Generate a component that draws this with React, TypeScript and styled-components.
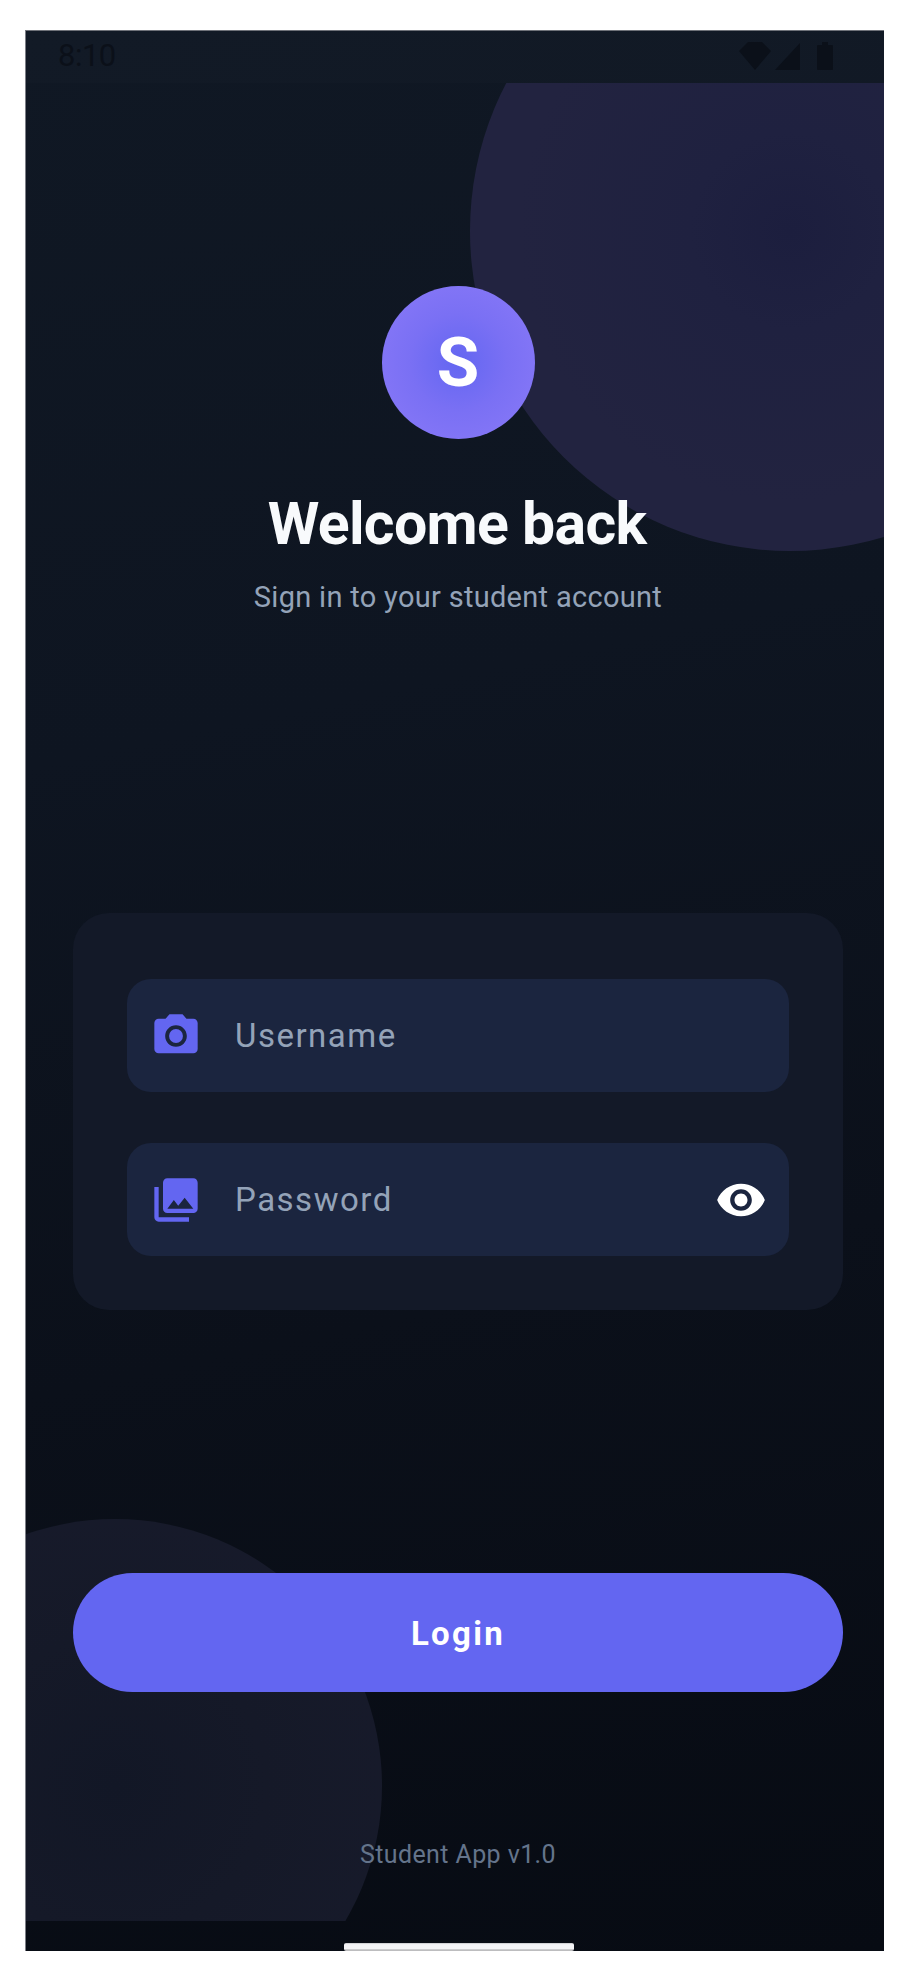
import React from "react";
import styled, { createGlobalStyle } from "styled-components";
import { MdPhotoCamera, MdPhotoLibrary, MdVisibility } from "react-icons/md";

const Global = createGlobalStyle`
  html, body { margin: 0; padding: 0; background: #ffffff; }
  * { box-sizing: border-box; }
  body { font-family: Roboto, "Liberation Sans", sans-serif; }
`;

const Page = styled.div`
  width: 913px;
  height: 1983px;
  padding: 30px 29px 32px 25px;
  background: #ffffff;
`;

const Screen = styled.div`
  position: relative;
  width: 859px;
  height: 1921px;
  display: flex;
  flex-direction: column;
  overflow: hidden;
  border-left: 1px solid #7c7e86;
  border-top: 1px solid #6f7279;
  background: linear-gradient(168deg, #101824 0%, #0e1521 35%, #0b101a 65%, #070b13 100%);
`;

const StatusBar = styled.div`
  position: relative;
  z-index: 1;
  flex: none;
  height: 52px;
  display: flex;
  align-items: center;
  justify-content: space-between;
  padding: 0 50px 2px 32px;
  background: rgba(24, 30, 44, 0.25);
`;

const Clock = styled.span`
  font-size: 31px;
  font-weight: 400;
  line-height: 36px;
  letter-spacing: -0.5px;
  color: #0b1019;
`;

const StatusIcons = styled.div`
  display: flex;
  align-items: center;
`;

const SignalIcon = styled.svg`
  margin-left: 2px;
`;

const BatteryIcon = styled.svg`
  margin-left: 14px;
`;

const BlobLayer = styled.div`
  position: absolute;
  top: 52px;
  left: 0;
  right: 0;
  bottom: 30px;
  overflow: hidden;
`;

const TopBlob = styled.div`
  position: absolute;
  left: 444px;
  top: -172px;
  width: 640px;
  height: 640px;
  border-radius: 50%;
  background: radial-gradient(circle at 50% 50%, #1c1e3e 0%, #1f2140 22%, #222340 60%);
`;

const BottomBlob = styled.div`
  position: absolute;
  left: -178px;
  top: 1436px;
  width: 534px;
  height: 534px;
  border-radius: 50%;
  background: radial-gradient(circle at 50% 50%, #121726 0%, #151928 40%, #181b2c 100%);
`;

const Main = styled.main`
  position: relative;
  z-index: 1;
  flex: 1;
  display: flex;
  flex-direction: column;
  align-items: center;
  padding: 0 41px 0 47px;
`;

const Avatar = styled.div`
  width: 153px;
  height: 153px;
  margin-top: 203px;
  flex: none;
  display: flex;
  align-items: center;
  justify-content: center;
  border-radius: 50%;
  background: radial-gradient(circle at 50% 50%, #6366f1 0%, #7a70f4 45%, #8b7af8 100%);
  color: #ffffff;
  font-size: 69px;
  font-weight: 700;
  line-height: 1;
`;

const Title = styled.h1`
  margin: 50px 2px 0 0;
  font-size: 59px;
  font-weight: 700;
  line-height: 70px;
  letter-spacing: -0.7px;
  color: #f8fafc;
  white-space: nowrap;
`;

const Subtitle = styled.p`
  margin: 18px 0 0;
  font-size: 29px;
  font-weight: 400;
  line-height: 40px;
  letter-spacing: 0.3px;
  color: #94a3b8;
  white-space: nowrap;
`;

const Card = styled.section`
  width: 770px;
  margin-top: 296px;
  padding: 66px 54px 54px 54px;
  display: flex;
  flex-direction: column;
  gap: 51px;
  border-radius: 36px;
  background: #131928;
`;

const Field = styled.div`
  height: 113px;
  display: flex;
  align-items: center;
  gap: 33px;
  padding: 0 22px 0 23px;
  border-radius: 24px;
  background: #1b253f;
  color: #6366f1;
`;

const Placeholder = styled.span`
  flex: 1;
  font-size: 33px;
  line-height: 40px;
  letter-spacing: 1.5px;
  color: #94a3b8;
`;

const LoginButton = styled.button`
  width: 770px;
  height: 119px;
  margin-top: 263px;
  padding: 2px 0 0;
  flex: none;
  border: 0;
  border-radius: 60px;
  background: #6366f1;
  color: #ffffff;
  font-family: inherit;
  font-size: 33px;
  font-weight: 700;
  letter-spacing: 2.3px;
`;

const Footer = styled.p`
  margin: 145px 0 0;
  font-size: 25px;
  line-height: 36px;
  letter-spacing: 0.4px;
  color: #64748b;
`;

const NavBar = styled.div`
  position: relative;
  z-index: 1;
  flex: none;
  height: 30px;
  display: flex;
  align-items: flex-end;
  justify-content: center;
  padding-left: 8px;
`;

const HomeIndicator = styled.div`
  width: 230px;
  height: 8px;
  border-radius: 2px;
  background: linear-gradient(#c4c5c8 0, #f4f4f6 20%, #f4f4f6 70%, #bdbdbf 85%);
`;

export default function App() {
  return (
    <>
      <Global />
      <Page>
        <Screen>
          <BlobLayer>
            <TopBlob />
            <BottomBlob />
          </BlobLayer>
          <StatusBar>
            <Clock>8:10</Clock>
            <StatusIcons>
              <svg width="34" height="28" viewBox="0 0 34 28" fill="#0b1019">
                <path d="M10 0h14l9 9-16 19L1 9z" />
              </svg>
              <SignalIcon width="28" height="28" viewBox="0 0 28 28" fill="#0b1019">
                <path d="M26 1v27H1z" />
              </SignalIcon>
              <BatteryIcon width="18" height="28" viewBox="0 0 18 28" fill="#0b1019">
                <path d="M6 0h6v3h4a1 1 0 0 1 1 1v23a1 1 0 0 1-1 1H2a1 1 0 0 1-1-1V4a1 1 0 0 1 1-1h4z" />
              </BatteryIcon>
            </StatusIcons>
          </StatusBar>
          <Main>
            <Avatar>S</Avatar>
            <Title>Welcome back</Title>
            <Subtitle>Sign in to your student account</Subtitle>
            <Card>
              <Field>
                <MdPhotoCamera size={52} />
                <Placeholder>Username</Placeholder>
              </Field>
              <Field>
                <MdPhotoLibrary size={52} />
                <Placeholder>Password</Placeholder>
                <MdVisibility size={52} color="#ffffff" />
              </Field>
            </Card>
            <LoginButton>Login</LoginButton>
            <Footer>Student App v1.0</Footer>
          </Main>
          <NavBar>
            <HomeIndicator />
          </NavBar>
        </Screen>
      </Page>
    </>
  );
}
